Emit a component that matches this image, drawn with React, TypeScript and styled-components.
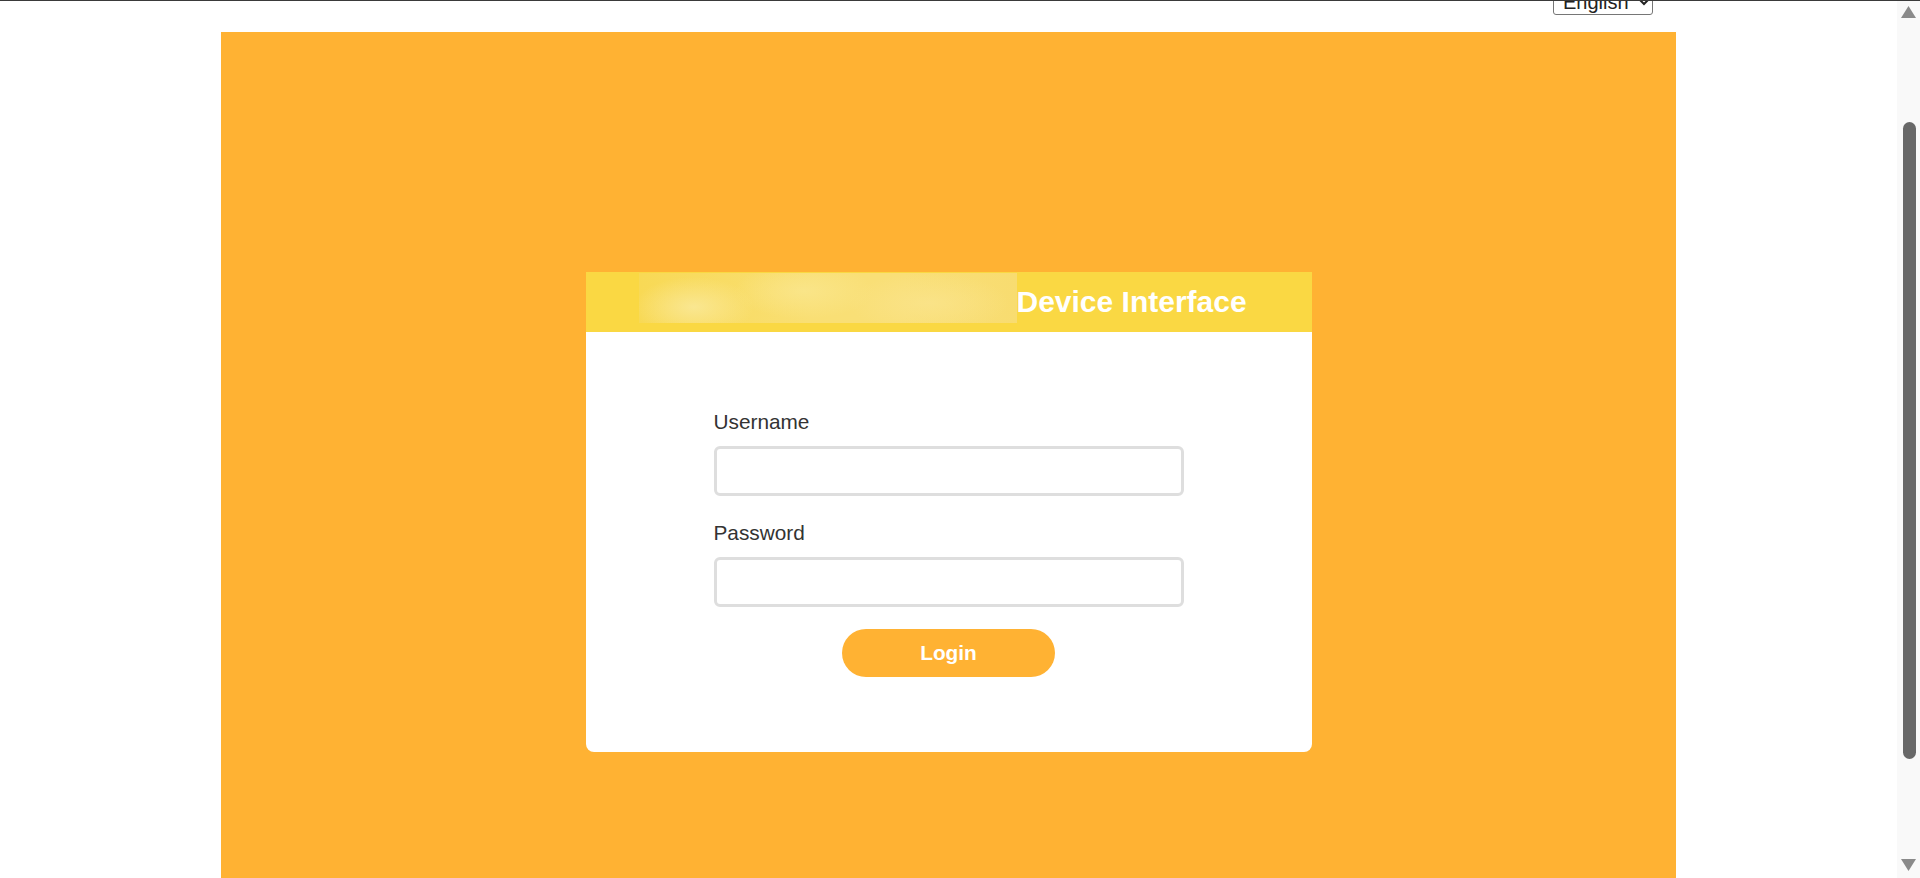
import React from 'react';
import styled, { createGlobalStyle } from 'styled-components';

const GlobalStyle = createGlobalStyle`
    html, body {
        margin: 0;
        padding: 0;
        overflow: hidden;
        background: #fff;
        font-family: "Liberation Sans", Arial, sans-serif;
    }
`;

const Shell = styled.div`
    display: flex;
    height: 878px;
    position: relative;
`;

const FrameEdge = styled.div`
    position: absolute;
    top: 0;
    left: 0;
    right: 0;
    height: 1px;
    background: #3a3a3a;
    z-index: 10;
`;

const Viewport = styled.div`
    flex: 1;
    overflow: hidden;
`;

const LangBar = styled.div`
    height: 32px;
    display: flex;
    justify-content: flex-end;
    align-items: flex-start;
    padding-right: 244px;
`;

const LangSelect = styled.select`
    margin-top: -11px;
    width: 100px;
    height: 26px;
    font-family: "Liberation Sans", Arial, sans-serif;
    font-size: 20px;
    color: #222;
    background: #fff;
    border: 1px solid #767676;
    border-radius: 3px;
    padding: 0 2px 0 5px;
`;

const Panel = styled.div`
    width: 1455px;
    margin: 0 auto;
    background: #ffb233;
    padding: 240px 0 320px;
`;

const Card = styled.div`
    width: 726px;
    margin: 0 auto;
    background: #fff;
    border-radius: 0 0 8px 8px;
    overflow: hidden;
`;

const Header = styled.div`
    height: 60px;
    background: #fad843;
    display: flex;
    align-items: center;
    padding-left: 53px;
`;

const Logo = styled.div`
    align-self: flex-start;
    margin-top: 1px;
    width: 378px;
    height: 50px;
    background:
        radial-gradient(ellipse 60px 30px at 55px 34px, rgba(250, 232, 150, 0.9), transparent),
        radial-gradient(ellipse 70px 28px at 165px 18px, rgba(250, 230, 140, 0.85), transparent),
        radial-gradient(ellipse 80px 30px at 290px 30px, rgba(250, 228, 140, 0.8), transparent),
        linear-gradient(90deg, #f8d955, #f9df74 45%, #f9df78 70%, #f8dc70);
`;

const Title = styled.h1`
    margin: 0;
    font-size: 30px;
    font-weight: bold;
    color: #fff;
    white-space: nowrap;
`;

const Form = styled.form`
    width: 470px;
    margin: 0 auto;
    padding: 78px 0 75px;
`;

const Label = styled.label`
    display: block;
    font-size: 20.8px;
    line-height: 23px;
    color: #333;
    margin-bottom: 13px;
`;

const Input = styled.input<{ $last?: boolean }>`
    display: block;
    box-sizing: border-box;
    width: 470px;
    height: 50px;
    border: 3px solid #dedede;
    border-radius: 6px;
    background: #fff;
    margin: 0 0 ${(p) => (p.$last ? '22px' : '25px')};
    font-size: 18px;
    padding: 0 10px;
`;

const LoginButton = styled.button`
    display: block;
    width: 213px;
    height: 48px;
    margin: 0 auto;
    border: none;
    border-radius: 24px;
    background: #ffb233;
    color: #fff;
    font-family: "Liberation Sans", Arial, sans-serif;
    font-size: 20.8px;
    font-weight: bold;
`;

const ScrollTrack = styled.div`
    width: 23px;
    background: #f9f9f9;
    display: flex;
    flex-direction: column;
    align-items: center;
`;

const Arrow = styled.svg`
    display: block;
    flex-shrink: 0;
`;

const TrackBody = styled.div`
    flex: 1;
    width: 100%;
    display: flex;
    justify-content: center;
`;

const Thumb = styled.div`
    width: 13px;
    margin-left: 1px;
    background: #686868;
    border-radius: 7px;
`;

export default function App() {
    const trackTop = 19;
    const thumbTop = 122;
    const thumbBottom = 759;

    return (
        <>
            <GlobalStyle />
            <Shell>
                <FrameEdge />
                <Viewport>
                    <LangBar>
                        <LangSelect defaultValue="en">
                            <option value="en">English</option>
                        </LangSelect>
                    </LangBar>
                    <Panel>
                        <Card>
                            <Header>
                                <Logo />
                                <Title>Device Interface</Title>
                            </Header>
                            <Form onSubmit={(e) => e.preventDefault()}>
                                <Label htmlFor="username">Username</Label>
                                <Input id="username" type="text" />
                                <Label htmlFor="password">Password</Label>
                                <Input id="password" type="password" $last />
                                <LoginButton type="submit">Login</LoginButton>
                            </Form>
                        </Card>
                    </Panel>
                </Viewport>
                <ScrollTrack>
                    <Arrow width="23" height={trackTop} viewBox="0 0 23 19">
                        <path d="M4 18 L11.5 6 L19 18 Z" fill="#8a8a8a" />
                    </Arrow>
                    <TrackBody>
                        <Thumb
                            style={{
                                marginTop: thumbTop - trackTop,
                                height: thumbBottom - thumbTop,
                            }}
                        />
                    </TrackBody>
                    <Arrow width="23" height="19" viewBox="0 0 23 19">
                        <path d="M4 0 L11.5 12 L19 0 Z" fill="#8a8a8a" />
                    </Arrow>
                </ScrollTrack>
            </Shell>
        </>
    );
}
